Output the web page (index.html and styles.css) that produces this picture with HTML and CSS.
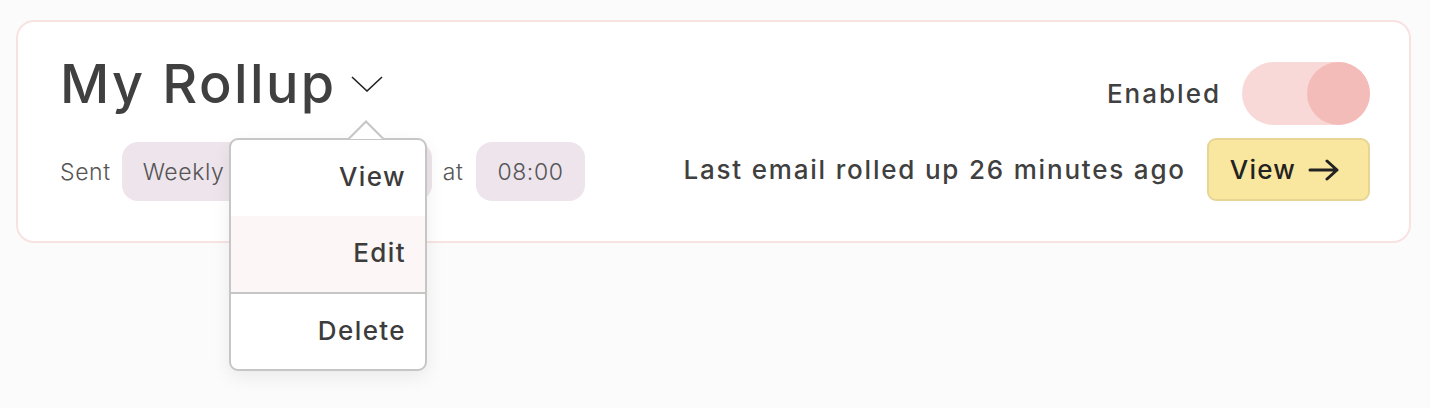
FILE: index.html
```html
<!DOCTYPE html>
<html lang="en">
    <head>
        <meta charset="UTF-8" />
        <meta name="viewport" content="width=device-width, initial-scale=1.0" />
        <title>Rollups</title>
        <link rel="stylesheet" href="styles.css">
    </head>
    <body>
        <div class="rollup-card">
            <div class="rollup-info">
                <div class="rollup-title">
                    <h1>My Rollup</h1>
                    <button class="menu-toggle" aria-label="Rollup menu">
                        <svg width="32" height="16" viewBox="0 0 32 16">
                            <path d="M1 1 L16 15 L31 1" fill="none" stroke="#222" stroke-width="1.6" />
                        </svg>
                    </button>
                    <ul class="rollup-menu">
                        <li class="menu-item">View</li>
                        <li class="menu-item active">Edit</li>
                        <li class="menu-item divider">Delete</li>
                    </ul>
                </div>
                <div class="schedule">
                    <span class="label">Sent</span>
                    <span class="pill pill-wide">Weekly on Mondays</span>
                    <span class="label label-at">at</span>
                    <span class="pill">08:00</span>
                </div>
            </div>

            <div class="rollup-status">
                <div class="status-row">
                    <span class="enabled-label">Enabled</span>
                    <span class="switch on"><span class="knob"></span></span>
                </div>
                <div class="status-row">
                    <span class="last-email">Last email rolled up 26 minutes ago</span>
                    <button class="view-btn">
                        <span>View</span>
                        <svg width="32" height="22" viewBox="0 0 32 22">
                            <path d="M2 11 H29 M19 2 L29 11 L19 20" fill="none" stroke="#222" stroke-width="3" stroke-linecap="round" stroke-linejoin="round" />
                        </svg>
                    </button>
                </div>
            </div>
        </div>
    </body>
</html>
```

FILE: styles.css
```css
html {
    height: 100%;
}

body {
    margin: 0;
    min-height: 100%;
    box-sizing: border-box;
    padding: 20px 19px 0 16px;
    background-color: #fcfbfb;
    font-family: Inter, "Open Sans", sans-serif;
    color: #444;
}

.rollup-card {
    display: flex;
    justify-content: space-between;
    padding: 40px 39px 40px 42px;
    background-color: #fff;
    border: 2px solid #f8e3e2;
    border-radius: 18px;
}

/* 왼쪽 영역 */
.rollup-info {
    display: flex;
    flex-direction: column;
    justify-content: space-between;
}

.rollup-title {
    position: relative;
    display: flex;
    align-items: center;
}

.rollup-title h1 {
    margin: 0;
    font-size: 54px;
    line-height: 44px;
    font-weight: 500;
    letter-spacing: 2.4px;
    color: #404040;
}

.menu-toggle {
    margin-left: 14px;
    padding: 0;
    border: none;
    background: none;
    display: flex;
    cursor: pointer;
}

.rollup-menu {
    position: absolute;
    left: 169px;
    top: 76px;
    width: 194px;
    margin: 0;
    padding: 0;
    list-style: none;
    background-color: #fff;
    border: 2px solid #c6c6c6;
    border-radius: 9px;
    box-shadow: 0 6px 18px rgba(0, 0, 0, 0.07);
    z-index: 2;
}

.rollup-menu::before,
.rollup-menu::after {
    content: "";
    position: absolute;
    border-style: solid;
    border-color: transparent;
}

.rollup-menu::before {
    top: -20px;
    left: 117px;
    border-width: 0 18px 18px;
    border-bottom-color: #c6c6c6;
}

.rollup-menu::after {
    top: -17px;
    left: 119px;
    border-width: 0 16px 16px;
    border-bottom-color: #fff;
}

.menu-item {
    height: 76px;
    box-sizing: border-box;
    display: flex;
    align-items: center;
    justify-content: flex-end;
    padding: 0 19px 3px 0;
    font-size: 26px;
    font-weight: 500;
    letter-spacing: 1.4px;
    color: #3c3c3c;
    cursor: pointer;
}

.menu-item:first-child {
    border-radius: 7px 7px 0 0;
}

.menu-item:last-child {
    height: 77px;
    border-radius: 0 0 7px 7px;
}

.menu-item.active {
    background-color: #fcf6f6;
}

.menu-item.divider {
    border-top: 2px solid #c6c6c6;
}

.schedule {
    display: flex;
    align-items: center;
    font-size: 23px;
    font-weight: 300;
    letter-spacing: 0.6px;
    color: #555;
}

.label {
    margin-right: 11px;
}

.label-at {
    margin: 0 13px 0 11px;
}

.pill {
    height: 59px;
    display: flex;
    align-items: center;
    padding: 0 21px;
    background-color: #ede4ec;
    border-radius: 16px;
    box-sizing: border-box;
}

.pill-wide {
    width: 310px;
    white-space: nowrap;
    overflow: hidden;
}

/* 오른쪽 영역 */
.rollup-status {
    display: flex;
    flex-direction: column;
    align-items: flex-end;
    gap: 13px;
}

.status-row {
    display: flex;
    align-items: center;
    gap: 21px;
}

.enabled-label {
    font-size: 26px;
    font-weight: 500;
    letter-spacing: 2px;
    color: #404040;
}

.switch {
    position: relative;
    display: block;
    width: 128px;
    height: 63px;
    border-radius: 32px;
    background-color: #f8d9d8;
}

.switch .knob {
    position: absolute;
    top: 0;
    right: 0;
    width: 63px;
    height: 63px;
    border-radius: 50%;
    background-color: #f4bcb9;
}

.last-email {
    font-size: 26px;
    font-weight: 500;
    letter-spacing: 1.8px;
    color: #404040;
}

.view-btn {
    display: flex;
    align-items: center;
    gap: 12px;
    height: 63px;
    padding: 0 28px 0 21px;
    background-color: #fae79f;
    border: 2px solid #e6d595;
    border-radius: 9px;
    font-family: inherit;
    font-size: 26px;
    font-weight: 500;
    letter-spacing: 1.2px;
    color: #222;
    cursor: pointer;
}
```
